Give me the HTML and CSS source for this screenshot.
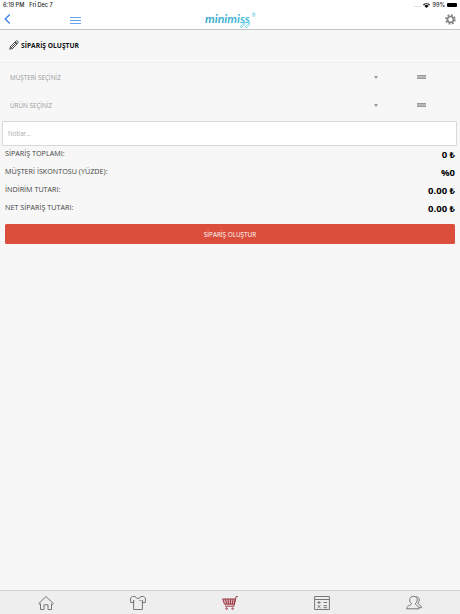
FILE: index.html
```
<!DOCTYPE html>
<html lang="tr">
<head>
  <meta charset="UTF-8" />
  <meta name="viewport" content="width=device-width, initial-scale=1" />
  <title>Sipariş Oluştur</title>
  <link rel="stylesheet" href="styles.css">
</head>
<body>
  <header class="header">
    <div class="status-bar">
      <span class="clock">6:19 PM</span>
      <span class="date">Fri Dec 7</span>
      <span class="signal">....</span>
      <svg class="wifi" viewBox="0 0 14 10"><path d="M0 3.2a10 10 0 0 1 14 0L12.5 4.8a7.8 7.8 0 0 0-11 0zM2.6 5.8a6.2 6.2 0 0 1 8.8 0L7 10z"/></svg>
      <span class="percent">99%</span>
      <span class="battery"></span>
    </div>
    <nav class="navbar">
      <svg class="back" viewBox="0 0 7 10"><path d="M5.8 0.6 1.2 5l4.6 4.4"/></svg>
      <svg class="menu" viewBox="0 0 11 8"><path d="M0 1.5h11M0 4.5h11M0 7.5h11"/></svg>
      <svg class="logo" viewBox="0 0 52 19">
        <defs>
          <linearGradient id="logo-color" x1="0" y1="0" x2="1" y2="1">
            <stop offset="0" stop-color="#2a9fc4"/>
            <stop offset="1" stop-color="#53c5df"/>
          </linearGradient>
        </defs>
        <text class="logo-text" x="0" y="13">minimiss</text>
        <!-- swashes under the last two letters -->
        <path class="logo-swash" d="M39.5 12c.3 3-2.500 6.500-3.800 5.200-.8-1.200 1.500-2.700 3.300-4M44.500 12c.3 3-2.500 6.500-3.800 5.200-.8-1.200 1.500-2.700 3.300-4"/>
        <text class="logo-mark" x="46.5" y="6.5">®</text>
      </svg>
      <svg class="gear" viewBox="0 0 20 20">
        <circle cx="10" cy="10" r="8.2" class="gear-teeth"/>
        <circle cx="10" cy="10" r="5.4" class="gear-ring"/>
      </svg>
    </nav>
  </header>

  <main class="content">
    <h1 class="title">
      <svg class="pencil" viewBox="0 0 20 20"><path d="M1.5 18.5 3 13 13.5 2.5a2.4 2.4 0 0 1 4 4L7 17zM3 13l4 4M5 15 15 5M12 4l4 4"/></svg>
      SİPARİŞ OLUŞTUR
    </h1>

    <div class="select-row">
      <span class="select-label">MÜŞTERİ SEÇİNİZ</span>
      <span class="caret"></span>
      <span class="handle"></span>
    </div>
    <div class="select-row">
      <span class="select-label">ÜRÜN SEÇİNİZ</span>
      <span class="caret"></span>
      <span class="handle"></span>
    </div>

    <input class="notes" type="text" placeholder="Notlar...">

    <dl class="totals">
      <div class="total"><dt>SİPARİŞ TOPLAMI:</dt><dd>0 ₺</dd></div>
      <div class="total"><dt>MÜŞTERİ İSKONTOSU (YÜZDE):</dt><dd>%0</dd></div>
      <div class="total"><dt>İNDİRİM TUTARI:</dt><dd>0.00 ₺</dd></div>
      <div class="total"><dt>NET SİPARİŞ TUTARI:</dt><dd>0.00 ₺</dd></div>
    </dl>

    <button class="submit">SİPARİŞ OLUŞTUR</button>
  </main>

  <footer class="tabs">
    <a class="tab"><svg viewBox="0 0 16 16"><path d="M.7 8.5 8 1.5l7.3 7-1 .9-.8-.7v5.8H10V9.8H6v4.7H2.5V8.7l-.8.7z"/></svg></a>
    <a class="tab"><svg viewBox="0 0 16 16"><path d="M5.2 1.5H2.3L.6 3v4.5h3V5M10.8 1.5h2.9L15.4 3v4.5h-3V5M3.6 5v9.5h8.8V5M5.2 1.5c.4 2.5 5.2 2.5 5.6 0M9.5 5.5h1.2"/></svg></a>
    <a class="tab active"><svg viewBox="0 0 16 16"><path class="basket" d="M.6 4h12.8l-1.3 5.2H2.5z"/><path d="M15.8 1.5h-1.6l-2.3 9.7H3M3.5 4l1 5.2M6 4l.5 5.2M8.5 4v5.2M11 4l-.6 5.2"/><circle cx="4.6" cy="13.6" r=".8"/><circle cx="10.6" cy="13.6" r=".8"/></svg></a>
    <a class="tab"><svg viewBox="0 0 16 16"><path d="M.6 1.5h14.8v13H.6zM.6 4.5h14.8M3.3 7.5h3.4M5 6v3M9.5 7.5H13M3.5 10.3l3 2.5M6.5 10.3l-3 2.5M9.5 10.7H13M9.5 12.7H13"/></svg></a>
    <a class="tab"><svg viewBox="0 0 16 16"><path d="M7.5 1.3c2.300 0 3.700 1.500 3.700 3.500s-1 3.200-1.900 3.800c0 1.900 3.400 1.400 3.700 5.200H.6c.3-3.800 4.900-3.400 4.900-5.200-.9-.6-1.800-1.800-1.800-3.800s1.500-3.500 3.800-3.500zM10.200 1.700c1.900.1 3.100 1.400 3.100 3.200 0 1.500-.6 2.500-1.400 3.200 0 1.600 3.300 1.300 3.500 4.600H13"/></svg></a>
  </footer>
</body>
</html>
```
FILE: styles.css
```
* {
  box-sizing: border-box;
  margin: 0;
  padding: 0;
}
body {
  display: flex;
  flex-direction: column;
  height: 100vh;
  overflow: hidden;
  background-color: #f7f7f7;
  color: #444;
  font-family: 'Open Sans', 'Noto Sans', sans-serif;
}
svg {
  display: block;
  fill: none;
}
.header {
  height: 30px;
  background-color: #fff;
  border-bottom: 1px solid #c4c4c4;
}
.status-bar {
  display: flex;
  align-items: center;
  height: 10px;
  padding: 0 3px;
  color: #222;
  font: 500 5.6px/10px Inter, 'Liberation Sans', sans-serif;
}
.date {
  margin-left: 5px;
}
.signal {
  margin-left: auto;
  color: #888;
}
.wifi {
  width: 7px;
  height: 5px;
  margin: 0 2px 0 3px;
  fill: #111;
}
.battery {
  width: 10px;
  height: 4px;
  margin-left: 2px;
  border-radius: 1px;
  background-color: #000;
}
.navbar {
  display: flex;
  align-items: center;
  height: 19px;
  padding: 0 4px;
}
.back {
  width: 7px;
  height: 10px;
  margin-bottom: 1px;
  stroke: #3d86f2;
  stroke-width: 1.4;
}
.menu {
  width: 11px;
  height: 8px;
  margin-left: 59px;
  stroke: #68a3ef;
}
.logo {
  width: 52px;
  height: 19px;
  margin-left: 124px;
}
.logo-text {
  fill: url(#logo-color);
  font: italic 700 12.2px 'Lato', cursive;
}
.logo-swash {
  stroke: #53c5df;
  stroke-width: .8;
}
.logo-mark {
  fill: #53c5df;
  font: 5px 'Open Sans', sans-serif;
}
.gear {
  width: 11px;
  height: 11px;
  margin-left: auto;
  stroke: #808080;
}
.gear-teeth {
  stroke-width: 3;
  stroke-dasharray: 3.22 3.22;
}
.gear-ring {
  stroke-width: 3;
}
.content {
  flex: 1;
}
.title {
  display: flex;
  align-items: center;
  gap: 2px;
  height: 33px;
  padding: 0 0 2px 9px;
  border-bottom: 1px solid #ededed;
  color: #111;
  font-size: 6.7px;
  font-weight: 700;
}
.pencil {
  width: 10px;
  height: 10px;
  stroke: #333;
  stroke-width: 1.7;
}
.select-row {
  display: flex;
  align-items: center;
  height: 28px;
  padding-left: 10px;
  color: #999;
  font-size: 6.3px;
}
.select-label {
  width: 364px;
}
.caret {
  border: 2px solid transparent;
  border-top: 3px solid #999;
  border-bottom: 0;
}
.handle {
  width: 9px;
  height: 4px;
  margin-left: 39px;
  border: solid #999;
  border-width: 1px 0;
  background-color: #b8b8b8;
}
.notes {
  display: block;
  width: 455px;
  height: 25px;
  margin: 2px 0 0 2px;
  padding: 0 5px;
  border: 1px solid #d8d8d8;
  border-radius: 1px;
  background-color: #fff;
  font: 6.2px 'Open Sans', sans-serif;
}
.notes::placeholder {
  color: #aaa;
}
.totals {
  padding: 0 5px;
}
.total {
  display: flex;
  justify-content: space-between;
  height: 18px;
}
.total dt {
  font-size: 7.2px;
  line-height: 15px;
}
.total dd {
  color: #000;
  font-size: 9.5px;
  font-weight: 700;
  line-height: 18px;
}
.submit {
  display: block;
  width: 450px;
  height: 20px;
  margin: 6px 0 0 5px;
  border: none;
  border-radius: 1.5px;
  background-color: #dc4e3c;
  color: #fff;
  font: 6.35px 'Open Sans', sans-serif;
}
.tabs {
  display: flex;
  height: 24px;
  border-top: 1px solid #d2d2d2;
  background-color: #eee;
}
.tab {
  display: flex;
  flex: 1;
  align-items: center;
  justify-content: center;
  stroke: #777;
}
.tab svg {
  width: 16px;
  height: 16px;
}
.tab.active {
  stroke: #9c3a45;
}
.basket {
  fill: #d9aeb2;
}
```
